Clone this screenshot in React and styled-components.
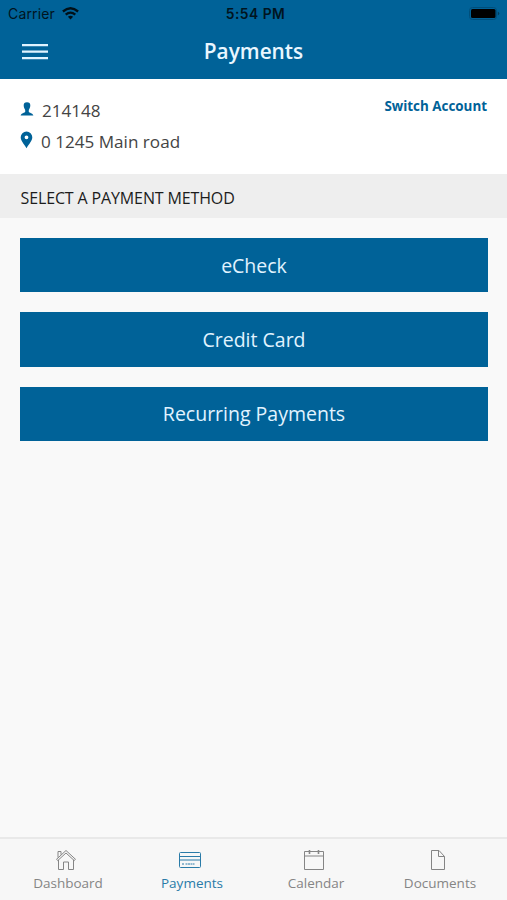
import React from "react";
import styled, { createGlobalStyle } from "styled-components";

const GlobalStyle = createGlobalStyle`
  * {
    box-sizing: border-box;
  }

  body {
    margin: 0;
    font-family: "Open Sans", sans-serif;
  }

  button {
    border: none;
    padding: 0;
    background: none;
    font-family: inherit;
  }

  svg {
    display: block;
    flex: none;
  }
`;

const Screen = styled.div`
  display: flex;
  flex-direction: column;
  height: 100vh;
  background: #f9f9f9;
`;

const Header = styled.header`
  height: 79px;
  background: #006298;
`;

const StatusBar = styled.div`
  display: grid;
  grid-template-columns: 1fr auto 1fr;
  align-items: center;
  height: 27px;
  padding: 0 7px 0 8px;
  color: #001420;
  font-family: Inter, sans-serif;
  font-size: 14px;
`;

const Carrier = styled.div`
  display: flex;
  align-items: center;
  gap: 7px;
  letter-spacing: 0.15px;
`;

const Time = styled.div`
  padding-left: 3px;
  font-size: 13.8px;
  font-weight: 600;
  letter-spacing: 0.5px;
`;

const Battery = styled.div`
  justify-self: end;
`;

const NavBar = styled.div`
  display: grid;
  grid-template-columns: 1fr auto 1fr;
  align-items: center;
  height: 50px;
  padding: 0 22px;
`;

const Title = styled.h1`
  margin: 0 0 2px;
  color: #e9f6ff;
  font-size: 20.8px;
  font-weight: 600;
`;

const Account = styled.section`
  display: flex;
  justify-content: space-between;
  align-items: flex-start;
  height: 94.5px;
  padding: 16px 20px 0;
  background: #fff;
`;

const AccountLine = styled.div`
  display: flex;
  align-items: center;
  gap: 8px;
  height: 31px;
  color: #444;
  font-size: 17.1px;

  svg {
    margin-bottom: ${props => (props.$pin ? "4px" : "3px")};
  }
`;

const SwitchButton = styled.button`
  height: 21px;
  color: #006298;
  font-size: 13.4px;
  font-weight: 700;
`;

const SectionTitle = styled.h2`
  margin: 0;
  height: 44.5px;
  padding-left: 20.5px;
  background: #eee;
  color: #1c1c1c;
  font-size: 16px;
  font-weight: 400;
  letter-spacing: -0.13px;
  line-height: 48px;
`;

const Methods = styled.main`
  display: flex;
  flex: 1;
  flex-direction: column;
  gap: 20px;
  padding: 20px 19.4px 0 20.4px;
`;

const MethodButton = styled.button`
  height: 54.4px;
  background: #006298;
  color: #e1f3ff;
  font-size: 19.5px;
`;

const TabBar = styled.nav`
  display: flex;
  height: 63px;
  padding: 0 5px 0 6px;
  border-top: 2px solid #e9e9e9;
  background: #f7f7f7;
`;

const Tab = styled.a`
  display: flex;
  flex: 1;
  flex-direction: column;
  align-items: center;
  padding-top: 10px;
  color: ${props => (props.$active ? "#2a7ba8" : "#858585")};
  font-size: 13.5px;
  line-height: 20px;

  svg {
    margin: 0 4px 2px 0;
    fill: none;
    stroke: currentColor;
    stroke-width: 1;
  }
`;

const icons = {
  home: (
    <svg width="22" height="22">
      <path d="M1.5 10.3 11 1.5l9.500 8.800-1.300 1.200L11 4l-8.200 7.500zM3 8.500V2.500h3v3.200M3.500 11v9.500h5V13h5v7.500h5V11" />
    </svg>
  ),
  card: (
    <svg width="24" height="22">
      <rect x="1.5" y="3.500" width="21" height="15" rx="1" />
      <path d="M1.500 7.500h21M1.500 11h21" />
      <path d="M4 15h2M7.500 15h9" strokeDasharray="2 .5" />
    </svg>
  ),
  calendar: (
    <svg width="22" height="22">
      <path d="M1.500 2.500h19v18h-19zM1.500 7h19" />
      <path d="M6.500 1v4M15.500 1v4" strokeWidth="1.600" />
    </svg>
  ),
  document: (
    <svg width="18" height="22">
      <path d="M2.500 1.500h7.500l5.500 6v13h-13zM9.500 1.500v6h6" />
    </svg>
  )
};

const tabs = [
  { name: "Dashboard", icon: icons.home },
  { name: "Payments", icon: icons.card, active: true },
  { name: "Calendar", icon: icons.calendar },
  { name: "Documents", icon: icons.document }
];

const methods = ["eCheck", "Credit Card", "Recurring Payments"];

const WifiIcon = () => (
  <svg width="17" height="13" viewBox="0 0 17 13" fill="none" stroke="#001018" strokeWidth="2.300">
    <path d="M.9 4.500Q8.500-1.900 16.100 4.500M3.700 7.600Q8.500 3.600 13.300 7.600" />
    <path d="M5.900 9.800Q8.500 7.800 11.100 9.800L8.500 12.600z" fill="#001018" stroke="none" />
  </svg>
);

const BatteryIcon = () => (
  <svg width="32" height="13" viewBox="0 0 32 13">
    <rect x="1.500" y=".5" width="27" height="12" rx="3" fill="none" stroke="#004e7a" />
    <rect x="3" y="2" width="24.500" height="9" rx="1.500" fill="#000" />
    <path d="M29.800 4.500q3 2 0 4z" fill="#003e60" />
  </svg>
);

const MenuIcon = () => (
  <svg width="26" height="18" viewBox="0 0 26 18" stroke="#dff3ff" strokeWidth="2.200">
    <path d="M0 2.200h26M0 8.700h26M0 15.200h26" />
  </svg>
);

const PersonIcon = () => (
  <svg width="14" height="14" viewBox="0 0 14 14" fill="#006298">
    <path d="M7 .2c2.300 0 3.500 1.200 3.300 3.300-.1 2-.8 3.400-1.500 4.400v2c.4.900 3.900.9 4.600 3.700H.6c.7-2.800 4.200-2.800 4.600-3.700v-2C4.500 6.900 3.800 5.500 3.700 3.500 3.500 1.400 4.700.2 7 .2z" />
  </svg>
);

const PinIcon = () => (
  <svg width="13" height="18" viewBox="0 0 13 18" fill="#006298">
    <path
      fillRule="evenodd"
      d="M6.500.5a5.800 5.800 0 0 1 5.800 5.800c0 3.600-3.100 6.300-5.800 11C3.800 12.600.7 9.900.7 6.300A5.800 5.800 0 0 1 6.500.5zm0 3.900a1.900 1.900 0 1 0 0 3.800 1.900 1.900 0 0 0 0-3.800z"
    />
  </svg>
);

const App = () => {
  return (
    <Screen>
      <GlobalStyle />
      <Header>
        <StatusBar>
          <Carrier>
            Carrier
            <WifiIcon />
          </Carrier>
          <Time>5:54 PM</Time>
          <Battery>
            <BatteryIcon />
          </Battery>
        </StatusBar>
        <NavBar>
          <MenuIcon />
          <Title>Payments</Title>
        </NavBar>
      </Header>
      <Account>
        <div>
          <AccountLine>
            <PersonIcon />
            214148
          </AccountLine>
          <AccountLine $pin>
            <PinIcon />0 1245 Main road
          </AccountLine>
        </div>
        <SwitchButton>Switch Account</SwitchButton>
      </Account>
      <SectionTitle>SELECT A PAYMENT METHOD</SectionTitle>
      <Methods>
        {methods.map(method => (
          <MethodButton key={method}>{method}</MethodButton>
        ))}
      </Methods>
      <TabBar>
        {tabs.map(tab => (
          <Tab key={tab.name} $active={tab.active}>
            {tab.icon}
            {tab.name}
          </Tab>
        ))}
      </TabBar>
    </Screen>
  );
};

export default App;
